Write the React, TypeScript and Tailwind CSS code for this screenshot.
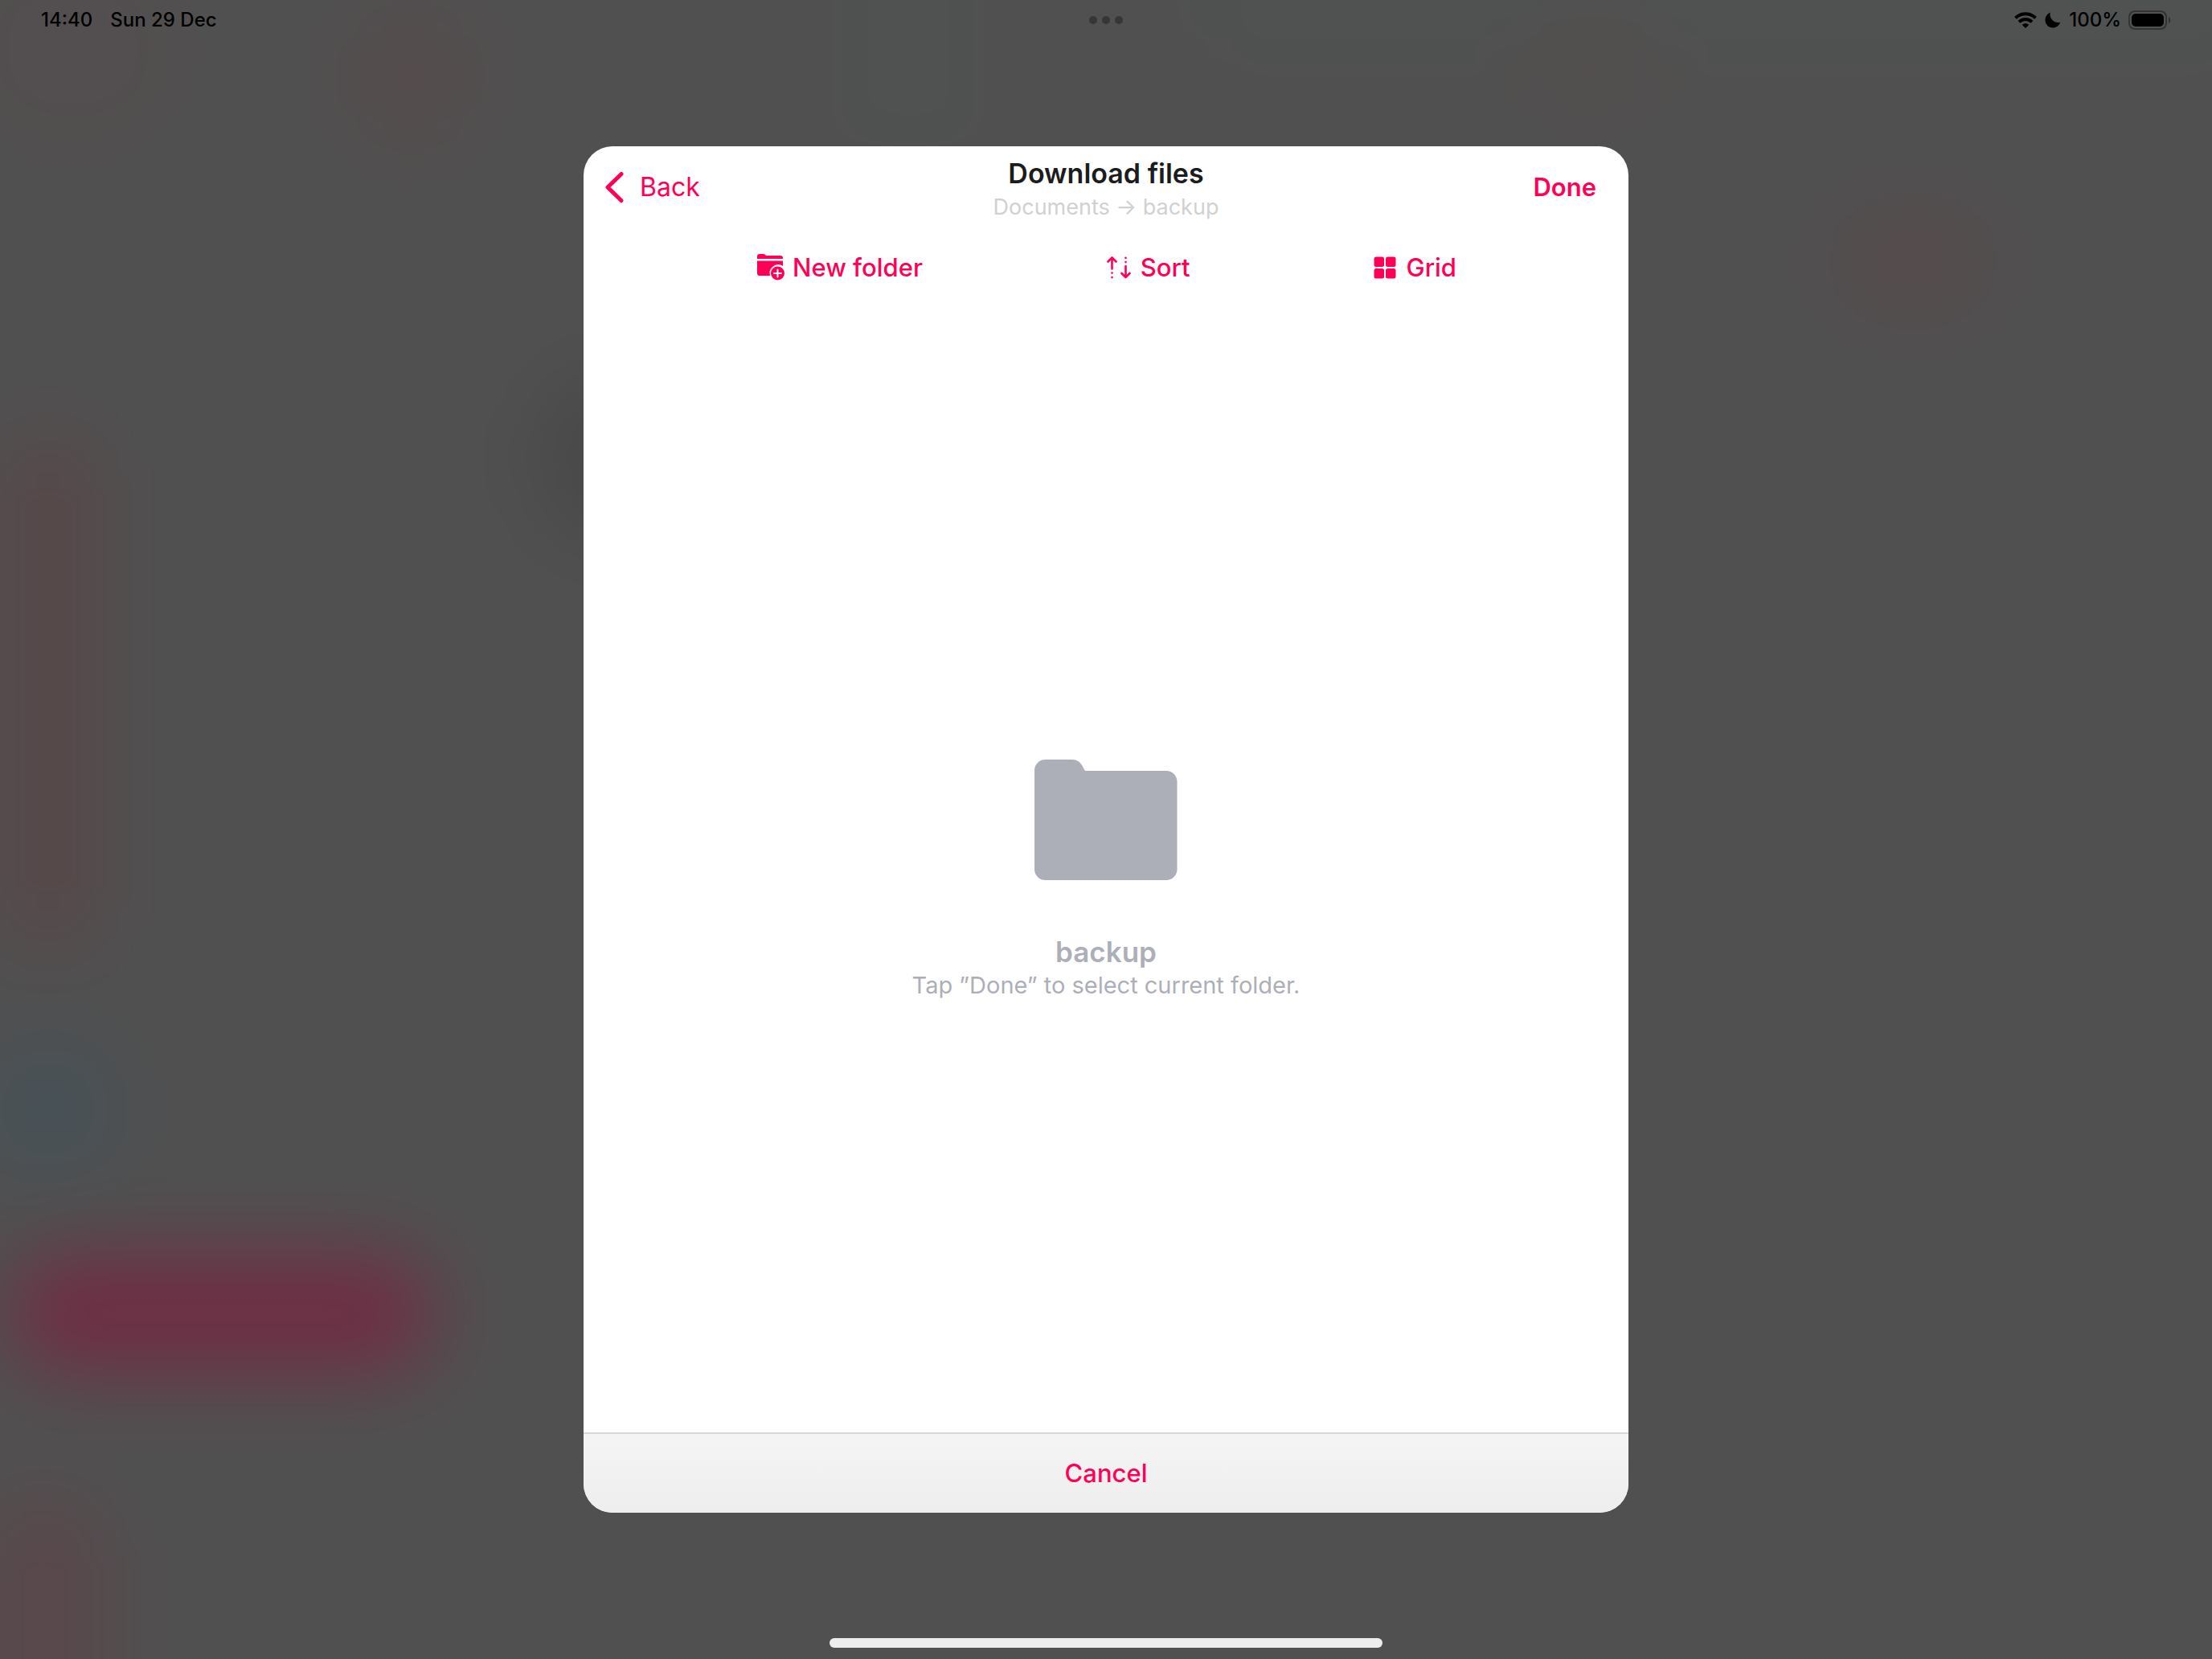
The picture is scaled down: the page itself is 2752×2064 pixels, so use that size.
import React from "react";

function Glow({ className }: { className: string }) {
  return <div className={`absolute ${className}`} />;
}

function Backdrop() {
  return (
    <div className="absolute inset-0 overflow-hidden bg-[#505050]" aria-hidden="true">
      <div className="absolute -inset-[200px] bg-[#505050] p-[200px] blur-[48px]">
        <div className="relative size-full">
          <Glow className="-left-[40px] -top-[60px] h-[240px] w-[260px] rounded-full bg-[#534e4f]" />
          <Glow className="left-[1080px] -top-[60px] h-[240px] w-[100px] rounded-full bg-[#4e5351]" />
          <Glow className="left-[1500px] -top-[60px] h-[110px] w-[1300px] rounded-full bg-[#4e5351]" />
          <Glow className="left-[10px] top-[1560px] h-[148px] w-[530px] rounded-full bg-[#6f2e44]" />
          <Glow className="left-[0px] top-[540px] h-[640px] w-[120px] rounded-full bg-[#584749]" />
          <Glow className="-left-[20px] top-[1300px] h-[160px] w-[160px] rounded-full bg-[#465158]" />
          <Glow className="-left-[20px] top-[1860px] h-[340px] w-[150px] rounded-full bg-[#5a474b]" />
          <Glow className="left-[430px] top-[0px] h-[190px] w-[160px] rounded-full bg-[#554c4d]" />
          <Glow className="left-[670px] top-[470px] h-[200px] w-[180px] rounded-full bg-[#484848]" />
          <Glow className="left-[1880px] top-[20px] h-[120px] w-[200px] rounded-full bg-[#534e4e]" />
          <Glow className="left-[2280px] top-[260px] h-[130px] w-[200px] rounded-full bg-[#554b4c]" />
        </div>
      </div>
    </div>
  );
}

function StatusBar() {
  return (
    <header className="relative flex h-[50px] items-center justify-between pl-[51px] pr-[50px] text-[24px] font-medium leading-none text-black">
      <div className="flex gap-[22px]">
        <span>14:40</span>
        <span>Sun 29 Dec</span>
      </div>
      <div className="absolute inset-x-0 flex justify-center gap-[6px]">
        <span className="size-[10px] rounded-full bg-[#363636]" />
        <span className="size-[10px] rounded-full bg-[#363636]" />
        <span className="size-[10px] rounded-full bg-[#363636]" />
      </div>
      <div className="flex items-center">
        <svg width="28" height="20" viewBox="0 0 28 20" fill="none" stroke="#000" strokeWidth="4">
          <path d="M1.500 7.400C8.400 .4 19.600 .4 26.500 7.400" />
          <path d="M6 12.200c4.400-4.300 11.600-4.300 16 0" />
          <path d="M14 20l-4.200-4.100c2.400-2.200 6-2.200 8.400 0z" fill="#000" stroke="none" />
        </svg>
        <svg className="ml-[10px]" width="20" height="20" viewBox="0 0 20 20">
          <path d="M7 .6C5.600 4 7 7.500 9.500 10c2.500 2.500 6 3.800 9.700 2.400C18 16.800 14.200 19.500 10 19.500 4.700 19.500 .5 15.300 .5 10 .5 5.800 3 2.100 7 .6z" fill="#000" />
        </svg>
        <span className="ml-[10px]">100%</span>
        <svg className="ml-[9px]" width="54" height="24" viewBox="0 0 54 24">
          <rect x="1" y="1" width="46" height="22" rx="7" fill="none" stroke="#333" strokeWidth="2" />
          <rect x="4" y="4" width="40" height="16" rx="5" fill="#000" />
          <path d="M50 8c3 1 3 7 0 8z" fill="#333" />
        </svg>
      </div>
    </header>
  );
}

function ChevronIcon() {
  return (
    <svg width="24" height="40" viewBox="0 0 24 40" fill="none" stroke="currentColor" strokeWidth="5" strokeLinecap="round" strokeLinejoin="round">
      <path d="M21 3.500L4 20l17 16.500" />
    </svg>
  );
}

function NewFolderIcon() {
  return (
    <svg width="36" height="34" viewBox="0 0 36 34">
      <path d="M0 6V3C0 1 1 0 3 0h5c2 0 2 2 4 2h17c2 0 3 1 3 3v1z" fill="currentColor" />
      <path d="M0 8.500h32v6.500a10.500 10.500 0 0 0-15.800 12H3c-2 0-3-1-3-3z" fill="currentColor" />
      <circle cx="25.500" cy="24" r="8.500" fill="currentColor" />
      <path d="M25.500 19.500v9M21 24h9" stroke="#fff" strokeWidth="2" strokeLinecap="round" />
    </svg>
  );
}

function SortIcon() {
  return (
    <svg width="30" height="28" viewBox="0 0 30 28" fill="none" stroke="currentColor" strokeWidth="2.600" strokeLinecap="round" strokeLinejoin="round">
      <path d="M6.500 15.500V2M1.500 6.500l5-5 5 5" />
      <path d="M23.500 12v13.500M18.500 21l5 5 5-5" />
      <path d="M6.500 20.500v.1M6.500 26v.1M23.500 1.800v.1M23.500 7v.1" />
    </svg>
  );
}

function GridIcon() {
  return (
    <svg width="28" height="28" viewBox="0 0 28 28" fill="currentColor">
      <rect x="0.500" y="0.500" width="12.500" height="12.500" rx="2.500" />
      <rect x="15" y="0.500" width="12.500" height="12.500" rx="2.500" />
      <rect x="0.500" y="15" width="12.500" height="12.500" rx="2.500" />
      <rect x="15" y="15" width="12.500" height="12.500" rx="2.500" />
    </svg>
  );
}

function FolderIcon() {
  return (
    <svg width="178" height="150" viewBox="0 0 178 150">
      <path
        d="M0 13.500C0 6 6 0 13.500 0H47c6 0 9.500 3 12 7l4 7h101c7.500 0 13.500 6 13.500 13.500V136.500c0 7.500-6 13.500-13.500 13.500H13.500C6 150 0 144 0 136.500z"
        fill="#adafb8"
      />
    </svg>
  );
}

export default function App() {
  return (
    <div className="relative flex min-h-screen flex-col font-['Inter',sans-serif]">
      <Backdrop />
      <StatusBar />
      <main className="relative flex flex-1 flex-col items-center pt-[132px]">
        <section
          role="dialog"
          aria-labelledby="title"
          className="flex min-h-[1700px] w-full max-w-[1300px] flex-col overflow-hidden rounded-[36px] bg-white text-[31px] leading-10 text-[#ff0056]"
        >
          <div className="grid h-[102px] grid-cols-[1fr_auto_1fr] items-center">
            <button className="flex items-center gap-5 justify-self-start pl-[26px] text-[32px]">
              <ChevronIcon />
              Back
            </button>
            <div className="whitespace-nowrap pt-2 text-center">
              <h1 id="title" className="text-[34px] font-semibold leading-[42px] text-[#1c1c1e]">Download files</h1>
              <p className="text-[27px] leading-[42px] text-[#d1d1d1]">Documents → backup</p>
            </div>
            <button className="justify-self-end pr-10 font-semibold">Done</button>
          </div>
          <div className="flex h-[98px] items-center justify-between pl-[216px] pr-[214px] font-medium">
            <button className="flex items-center gap-2">
              <NewFolderIcon />
              New folder
            </button>
            <button className="flex items-center gap-3">
              <SortIcon />
              Sort
            </button>
            <button className="flex items-center gap-3">
              <GridIcon />
              Grid
            </button>
          </div>
          <div className="flex flex-1 flex-col items-center justify-center pt-7 text-[#adafb8]">
            <FolderIcon />
            <h2 className="mt-[68px] text-[35px] font-semibold leading-[42px]">backup</h2>
            <p className="text-[29px] leading-[42px]">Tap ”Done” to select current folder.</p>
          </div>
          <button className="h-[100px] border-t-2 border-[#d8d8d8] bg-linear-to-b from-[#f4f4f4] to-[#eeeeee] font-medium">Cancel</button>
        </section>
      </main>
      <div className="relative mb-[14px] h-3 w-1/4 self-center rounded-full bg-[#ededed]" />
    </div>
  );
}
